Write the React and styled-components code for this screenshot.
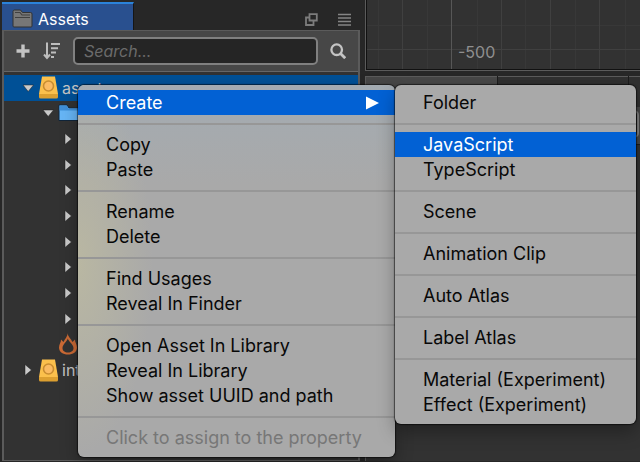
import React from 'react';
import styled, { createGlobalStyle } from 'styled-components';

const Global = createGlobalStyle`
  *, *::before, *::after { box-sizing: border-box; }
  body { margin: 0; background: #272727; font-family: Inter, Roboto, sans-serif; overflow: hidden; }
  button, input { font: inherit; color: inherit; border: 0; padding: 0; margin: 0; background: none; }
  ul { list-style: none; margin: 0; padding: 0; }
`;

const Editor = styled.main`
  position: relative;
  display: grid;
  grid-template-columns: minmax(0, 72fr) minmax(0, 55fr);
  column-gap: 5px;
  min-height: 100vh;
  color: #c4c4c4;
`;

const AssetsPanel = styled.section`
  display: flex;
  flex-direction: column;
  padding: 2px 0 1px 2px;
`;

const TabBar = styled.header`
  display: flex;
  align-items: stretch;
  height: 28px;
`;

const Tab = styled.button`
  display: flex;
  align-items: center;
  gap: 5px;
  width: 132px;
  padding: 3px 0 0 10px;
  background: #29508f;
  border-top: 2px solid #2b83da;
  border-right: 1px solid #161616;
  color: #fff;
  font-size: 16px;
  line-height: 20px;
`;

const PanelActions = styled.div`
  display: flex;
  align-items: center;
  gap: 20px;
  margin-left: auto;
  padding: 7px 9px 0 0;
`;

const IconButton = styled.button`
  display: flex;
  align-items: center;
  justify-content: center;
`;

const PanelBody = styled.div`
  flex: 1;
  display: flex;
  flex-direction: column;
  background: #474747;
  border: 1px solid #5b5b5b;
  border-left-width: 2px;
  border-right-width: 2px;
`;

const Toolbar = styled.div`
  display: flex;
  align-items: center;
  gap: 12px;
  height: 40px;
  padding: 0 12px;
`;

const SearchInput = styled.input`
  flex: 1;
  min-width: 0;
  height: 28px;
  padding: 0 9px;
  background: #252525;
  border: 2px solid #808080;
  border-radius: 5px;
  font-size: 16px;
  font-style: italic;
  &::placeholder { color: #6b6b6b; opacity: 1; }
`;

const TreeFrame = styled.div`
  flex: 1;
  background: #323232;
  border-top: 1px solid #666;
  padding-top: 3px;
`;

const Tree = styled.ul`
  display: grid;
  grid-auto-rows: 1fr;
  height: 308px;
`;

const TreeRow = styled.li`
  display: flex;
  align-items: center;
  gap: 3px;
  padding-left: ${(p) => p.$indent}px;
  background: ${(p) => (p.$selected ? '#005096' : 'transparent')};
  font-size: 16px;
  line-height: 20px;
`;

const RightColumn = styled.div`
  display: flex;
  flex-direction: column;
  gap: 5px;
`;

const SceneView = styled.section`
  height: 71px;
  border: 1px solid #5b5b5b;
  border-top: 0;
  border-right: 0;
  padding: 0 0 1px 1px;
  background: #111;
`;

const SceneSvg = styled.svg`
  display: block;
  width: 100%;
  height: 100%;
  background: #323232;
`;

const LowerPanel = styled.section`
  flex: 1;
  margin-bottom: 1px;
  background: #323232;
  border-left: 1px solid #5b5b5b;
`;

const LowerTabs = styled.div`
  display: grid;
  grid-template-columns: 131px 130px 1fr;
  height: 27px;
  gap: 1px;
  background: #1c1c1c;
`;

const LowerTab = styled.div`
  padding: 5px 13px;
  background: ${(p) => (p.$active ? '#474747' : '#303030')};
  border-top: 1px solid #5b5b5b;
`;

const LowerToolbar = styled.div`
  display: flex;
  justify-content: flex-end;
  align-items: center;
  height: 42px;
  background: #474747;
  border-top: 1px solid #5b5b5b;
  border-bottom: 1px solid #1c1c1c;
`;

const FilterInput = styled.input`
  width: 130px;
  height: 28px;
  margin-right: 1px;
  background: #252525;
  border: 2px solid #808080;
  border-radius: 5px;
`;

const MenuLayer = styled.div`
  position: absolute;
  left: 78px;
  top: 85px;
  display: flex;
  align-items: flex-start;
`;

const Menu = styled.div`
  width: ${(p) => p.$width}px;
  padding: 5px 0 7px;
  border-radius: 6px;
  background: ${(p) =>
    p.$tinted
      ? 'radial-gradient(ellipse 75px 190px at 0 180px, #b9b7a2, transparent), linear-gradient(#a3abb2, #a9a9a9 100px)'
      : '#a9a9a9'};
  box-shadow: 0 0 1px 1px rgba(0, 0, 0, 0.55), 0 8px 18px rgba(0, 0, 0, 0.3);
`;

const MenuItem = styled.button`
  display: flex;
  align-items: center;
  justify-content: space-between;
  width: 100%;
  height: 25px;
  padding: 0 16px 0 28px;
  background: ${(p) => (p.$active ? '#0261d4' : 'transparent')};
  color: ${(p) => (p.$active ? '#fff' : '#080808')};
  font-size: 18px;
  line-height: 25px;
  white-space: nowrap;
  &:disabled { color: #777; }
`;

const Separator = styled.hr`
  height: 2px;
  margin: 8px 0 7px;
  border: 0;
  background: #979797;
`;

const Caret = ({ open }) => (
  <svg width="13" height="12" viewBox="0 0 13 12" aria-hidden="true">
    <path d={open ? 'M1 3h10.500L6.200 9.500z' : 'M3 0.500v11l6.500-5.500z'} fill="#cacaca" stroke="#1e1e1e" strokeWidth="0.500" />
  </svg>
);

const DatabaseIcon = () => (
  <svg width="21" height="23" viewBox="0 0 21 23" aria-hidden="true">
    <path d="M4 0.500h13l3 17.500H1z" fill="#fbc04c" />
    <path d="M1 18h19v3q0 1.500-1.500 1.500h-16Q1 22.500 1 21z" fill="#dc9f30" />
    <circle cx="10.500" cy="10" r="5" fill="#fbbb62" stroke="#c98d31" strokeWidth="1.600" />
  </svg>
);

const FolderIcon = () => (
  <svg width="22" height="18" viewBox="0 0 22 18" aria-hidden="true">
    <path d="M1 1h8l2 3h10v12.500H1z" fill="#67b6f6" stroke="#10253a" />
    <path d="M1.500 1.500h7l2 3h10v2h-19z" fill="#3f8fd8" />
  </svg>
);

const FlameIcon = () => (
  <svg width="20" height="24" viewBox="0 0 20 24" aria-hidden="true">
    <path
      d="M9.500 1C9.800 4.500 6.800 7 5.500 10L3 7.500C3.200 10.500 1 12 1 15.500 1 20 5 22.500 10 22.500s9-2.500 9-7c0-3.500-2.200-5-2-8L14.500 10C13.200 7 9.800 4.500 9.500 1z"
      fill="#cb6a35"
    />
    <path d="M9.800 6.500C9 9.500 4.500 12.500 4.500 16c0 2.800 2.300 4.500 5.500 4.500s5.500-1.700 5.500-4.500C15.500 12.500 10.600 9.500 9.800 6.500z" fill="#323232" />
  </svg>
);

const TREE = [
  { indent: 18, open: true, selected: true, icon: <DatabaseIcon />, label: 'assets' },
  { indent: 38, open: true, icon: <FolderIcon /> },
  ...Array.from({ length: 8 }, () => ({ indent: 58, open: false })),
  { indent: 54, leaf: true, icon: <FlameIcon /> },
  { indent: 18, open: false, icon: <DatabaseIcon />, label: 'inter' },
];

const MAIN_MENU = [
  ['Create'],
  ['Copy', 'Paste'],
  ['Rename', 'Delete'],
  ['Find Usages', 'Reveal In Finder'],
  ['Open Asset In Library', 'Reveal In Library', 'Show asset UUID and path'],
  ['Click to assign to the property'],
];

const CREATE_MENU = [
  ['Folder'],
  ['JavaScript', 'TypeScript'],
  ['Scene'],
  ['Animation Clip'],
  ['Auto Atlas'],
  ['Label Atlas'],
  ['Material (Experiment)', 'Effect (Experiment)'],
];

const ContextMenu = ({ label, groups, active, disabled, submenu, width, tinted }) => (
  <Menu role="menu" aria-label={label} $width={width} $tinted={tinted}>
    {groups.map((group, i) => (
      <React.Fragment key={group[0]}>
        {i > 0 && <Separator />}
        {group.map((text) => (
          <MenuItem key={text} role="menuitem" $active={text === active} disabled={text === disabled}>
            {text}
            {text === submenu && (
              <svg width="13" height="14" viewBox="0 0 13 14" aria-hidden="true">
                <path d="M0 0.500v13L13 7z" fill="#fff" />
              </svg>
            )}
          </MenuItem>
        ))}
      </React.Fragment>
    ))}
  </Menu>
);

export default function App() {
  return (
    <>
      <Global />
      <Editor>
        <AssetsPanel>
          <TabBar>
            <Tab>
              <svg width="21" height="19" viewBox="0 0 21 19" aria-hidden="true">
                <path d="M1 2.500q0-1.500 1.500-1.500h6l2 2.500h8q1.500 0 1.500 1.500v12q0 1-1 1H2q-1 0-1-1z" fill="#777" stroke="#333" />
                <path d="M3 3.500h5l2 2.500h8M3 8.500h15" fill="none" stroke="#404040" strokeWidth="1.200" />
              </svg>
              Assets
            </Tab>
            <PanelActions>
              <IconButton aria-label="Pop out">
                <svg width="13" height="13" viewBox="0 0 13 13" fill="none" stroke="#7c7c7c" strokeWidth="1.800" aria-hidden="true">
                  <path d="M4.500 1.200h7.300v6.300H4.500zM4.500 4.500H1V12h7.500V8" />
                </svg>
              </IconButton>
              <IconButton aria-label="Panel menu">
                <svg width="13" height="13" viewBox="0 0 13 13" stroke="#858585" strokeWidth="1.300" aria-hidden="true">
                  <path d="M0 1.500h13M0 5h13M0 8.500h13M0 12h13" />
                </svg>
              </IconButton>
            </PanelActions>
          </TabBar>
          <PanelBody>
            <Toolbar>
              <IconButton aria-label="Add asset">
                <svg width="14" height="14" viewBox="0 0 14 14" stroke="#c4c4c4" strokeWidth="3.400" aria-hidden="true">
                  <path d="M7 0.500v13M0.500 7h13" />
                </svg>
              </IconButton>
              <IconButton aria-label="Sort">
                <svg width="19" height="18" viewBox="0 0 19 18" fill="none" stroke="#bdbdbd" strokeWidth="2" aria-hidden="true">
                  <path d="M5 0.500v15M2 12.500L5 16l3-3.500M9 2h9M9 6.300h7M9 10.600h5M9 15h3" />
                </svg>
              </IconButton>
              <SearchInput type="text" placeholder="Search..." aria-label="Search assets" />
              <IconButton aria-label="Search">
                <svg width="16" height="16" viewBox="0 0 16 16" fill="none" stroke="#c4c4c4" strokeWidth="2.300" aria-hidden="true">
                  <circle cx="6.700" cy="6.700" r="5.300" />
                  <path d="M10.500 10.500l4.700 4.700" strokeWidth="2.800" />
                </svg>
              </IconButton>
            </Toolbar>
            <TreeFrame>
              <Tree>
                {TREE.map((row, i) => (
                  <TreeRow key={i} $indent={row.indent} $selected={row.selected}>
                    {!row.leaf && <Caret open={row.open} />}
                    {row.icon}
                    {row.label && <span>{row.label}</span>}
                  </TreeRow>
                ))}
              </Tree>
            </TreeFrame>
          </PanelBody>
        </AssetsPanel>

        <RightColumn>
          <SceneView>
            <SceneSvg aria-label="Scene grid">
              <path d="M11.500 0v70M60.500 0v70M110.500 0v70M158.500 0v70M208.500 0v70M258.500 0v70M0 25.500h280" stroke="#383838" />
              <path d="M35.500 0v70M134.500 0v70M183.500 0v70M232.500 0v70M0 49.500h280" stroke="#404040" />
              <path d="M84.500 0v70" stroke="#575757" />
              <text x="91" y="58" fill="#8f8f8f" fontSize="16">-500</text>
            </SceneSvg>
          </SceneView>
          <LowerPanel>
            <LowerTabs>
              <LowerTab $active />
              <LowerTab>
                <svg width="8" height="12" viewBox="0 0 8 12" aria-hidden="true">
                  <path d="M2 1h4v10H2z" fill="#777" />
                </svg>
              </LowerTab>
              <LowerTab />
            </LowerTabs>
            <LowerToolbar>
              <FilterInput type="text" aria-label="Filter" />
            </LowerToolbar>
          </LowerPanel>
        </RightColumn>

        <MenuLayer>
          <ContextMenu label="Asset menu" groups={MAIN_MENU} active="Create" submenu="Create" disabled="Click to assign to the property" width={317} tinted />
          <ContextMenu label="Create" groups={CREATE_MENU} active="JavaScript" width={241} />
        </MenuLayer>
      </Editor>
    </>
  );
}
